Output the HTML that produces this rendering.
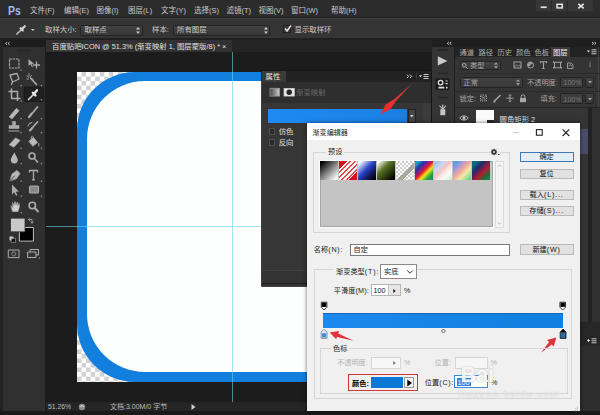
<!DOCTYPE html>
<html lang="zh-CN">
<head>
<meta charset="utf-8">
<title>Photoshop</title>
<style>
html,body{margin:0;padding:0;}
body{width:600px;height:415px;overflow:hidden;position:relative;background:#1c1c1c;font-family:"Liberation Sans","Noto Sans CJK SC",sans-serif;font-size:7.5px;line-height:1;color:#d8d8d8;}
.a{position:absolute;white-space:nowrap;}
.t{position:absolute;white-space:nowrap;line-height:1;}
/* ---------- app chrome ---------- */
#menubar{left:0;top:0;width:600px;height:17px;background:#2c2c2c;}
#menubar .t{top:6.6px;font-size:7.5px;color:#c8c8c8;}
#optbar{left:0;top:18.300px;width:600px;height:19.500px;background:#353535;border-top:1px solid #404040;box-sizing:border-box;}
#optbar .t{font-size:7.4px;color:#cccccc;}
.dd{position:absolute;background:linear-gradient(#424242,#383838);border:1px solid #232323;box-sizing:border-box;border-radius:1.5px;}
/* ---------- toolbar ---------- */
#tools{left:3px;top:40px;width:42px;height:371px;background:#303030;}
/* ---------- doc ---------- */
#tabbar{left:46px;top:40px;width:386px;height:11.500px;background:#242424;}
#doctab{left:0;top:0;width:186px;height:11.500px;background:#313131;}
#work{left:46px;top:52px;width:386px;height:350px;background:#1c1c1c;overflow:hidden;}
#status{left:46px;top:402px;width:386px;height:9px;background:#252525;}
/* ---------- dialog ---------- */
#dlg{left:307px;top:123px;width:273px;height:288.3px;background:#f0f0f0;color:#111;box-shadow:0 0 4px rgba(0,0,0,.6);}
#dlg .t{font-size:7.2px;color:#1a1a1a;}
.l{letter-spacing:.8px;}
.btn{position:absolute;box-sizing:border-box;border:1px solid #b9b9b9;background:#e1e1e1;text-align:center;font-size:7.2px;line-height:8.4px;color:#111;}
.grp{position:absolute;box-sizing:border-box;border:1px solid #d5d5d5;}
.ptab{top:8.5px;font-size:7.3px;color:#adadad;}
.fld{position:absolute;box-sizing:border-box;border:1px solid #7a7a7a;background:#fff;}
</style>
</head>
<body>

<!-- MENU BAR -->
<div id="menubar" class="a">
  <div class="a" style="left:5px;top:3px;width:16.5px;height:12.5px;background:#272b33;border-radius:1px;"></div>
  <div class="t" style="left:7.5px;top:4.1px;font-size:13px;font-weight:bold;color:#9dbde0;transform:scaleX(.8);transform-origin:0 0;">Ps</div>
  <div class="t" style="left:30px;">文件(F)</div>
  <div class="t" style="left:64px;">编辑(E)</div>
  <div class="t" style="left:96.5px;">图像(I)</div>
  <div class="t" style="left:128px;">图层(L)</div>
  <div class="t" style="left:161px;">文字(Y)</div>
  <div class="t" style="left:194px;">选择(S)</div>
  <div class="t" style="left:226.5px;">滤镜(T)</div>
  <div class="t" style="left:258.5px;">视图(V)</div>
  <div class="t" style="left:291px;">窗口(W)</div>
  <div class="t" style="left:331px;">帮助(H)</div>
  <svg class="a" style="left:530px;top:0;" width="70" height="17" viewBox="530 0 70 17">
    <rect x="536" y="0" width="56.700" height="11.300" fill="#373737"/>
    <path d="M551.300 0 V11.300 M567.300 0 V11.300" stroke="#2a2a2a" stroke-width="1"/>
    <rect x="540.700" y="6.400" width="6" height="1.700" fill="#e4e4e4"/>
    <rect x="557" y="4.300" width="5.300" height="3.600" fill="none" stroke="#e4e4e4" stroke-width="1.500"/>
    <path d="M578.300 3.800 L583.700 8.400 M583.700 3.800 L578.300 8.400" stroke="#e4e4e4" stroke-width="1.600" fill="none"/>
  </svg>
</div>
<div class="a" style="left:0;top:17px;width:600px;height:1px;background:#1d1d1d;"></div>

<!-- OPTIONS BAR -->
<div id="optbar" class="a">
  <svg class="a" style="left:8px;top:3px;" width="32" height="16" viewBox="8 21 32 16">
    <path d="M16.400 33.600 L21.300 28.700" stroke="#c4c4c4" stroke-width="1.400" fill="none"/>
    <path d="M20.600 27.200 L22.800 29.400 M21.500 28.500 L24.800 25.200" stroke="#d4d4d4" stroke-width="2.200" fill="none" stroke-linecap="round"/>
    <path d="M31 28 h3.600 l-1.800 2 z" fill="#cfcfcf"/>
  </svg>
  <div class="t" style="left:45px;top:6.5px;">取样大小:</div>
  <div class="dd" style="left:80px;top:5.5px;width:63px;height:11px;"></div>
  <div class="t" style="left:84.5px;top:7px;">取样点</div>
  <svg class="a" style="left:135px;top:7px;" width="6" height="9" viewBox="0 0 6 9"><path d="M1 3.4 L3 1 L5 3.4 Z M1 5.4 L3 7.8 L5 5.4 Z" fill="#d0d0d0"/></svg>
  <div class="t" style="left:152px;top:6.5px;">样本:</div>
  <div class="dd" style="left:172.5px;top:5.5px;width:97px;height:11px;"></div>
  <div class="t" style="left:177px;top:7px;">所有图层</div>
  <svg class="a" style="left:262.5px;top:7px;" width="6" height="9" viewBox="0 0 6 9"><path d="M1 3.4 L3 1 L5 3.4 Z M1 5.4 L3 7.8 L5 5.4 Z" fill="#d0d0d0"/></svg>
  <div class="a" style="left:283px;top:6px;width:8px;height:8px;box-sizing:border-box;border:1px solid #1e1e1e;background:#3c3c3c;"></div>
  <svg class="a" style="left:283px;top:5px;" width="10" height="10" viewBox="0 0 10 10"><path d="M2 4.5 L4 7 L8 1.5" stroke="#e6e6e6" stroke-width="1.4" fill="none"/></svg>
  <div class="t" style="left:294.5px;top:6.5px;">显示取样环</div>
</div>
<div class="a" style="left:0;top:37.800px;width:600px;height:2.500px;background:#202020;"></div>

<!-- TOOLBAR -->
<div class="a" style="left:0;top:40px;width:3px;height:375px;background:#232323;"></div>
<div id="tools" class="a">
  <div class="a" style="left:0;top:0;width:42px;height:6.500px;background:#1c1c1c;"></div>
  <svg class="a" style="left:0;top:0;" width="42" height="230" viewBox="3 40 42 230">
    <g fill="none" stroke="#ababab" stroke-width="1.2" stroke-linecap="round" stroke-linejoin="round">
      <!-- header arrows + grip -->
      <path d="M6.800 42.400 L5.600 43.500 L6.800 44.600 M9.300 42.400 L8.100 43.500 L9.300 44.600" stroke="#ddd" stroke-width=".9"/>
      <path d="M18 50.5 H30" stroke="#262626" stroke-width="1.6"/>
      <!-- selected highlight -->
      <rect x="24" y="87" width="19.5" height="14.5" fill="#1f1f1f" stroke="#191919" stroke-width=".8" rx="1"/>
      <!-- marquee -->
      <rect x="9.5" y="59" width="9.5" height="9" stroke-dasharray="1.8 1.6" stroke-width="1.1"/>
      <!-- move -->
      <path d="M28.5 59 L28.5 66 L30.5 64.3 L32 67.3 L33 66.8 L31.6 63.9 L34 63.7 Z" fill="#ababab" stroke="none"/>
      <path d="M36.5 62 V68 M33.5 65 H39.5" stroke-width="1.3"/>
      <!-- lasso -->
      <path d="M10 75 L17 73.5 L19 79 L12.5 82 Z M12.5 82 L11.5 84.5" stroke-width="1.3"/>
      <!-- wand -->
      <path d="M30.5 78 L36.5 84.5" stroke-width="1.6"/>
      <path d="M29 73.5 V76 M27 76 L28.6 77.2 M31.5 75.5 L30.4 76.8 M26.8 79 H28.5 M32 79 H33" stroke-width=".9"/>
      <!-- crop -->
      <path d="M11.5 89 V98.5 H20 M9 91.5 H17.5 V100.5" stroke-width="1.5"/>
      <!-- eyedropper (selected) -->
      <path d="M28.5 99.5 L33.5 94.5" stroke="#e6e6e6" stroke-width="1.5"/>
      <path d="M32.8 92.8 L35.5 95.5 M33.8 94.2 L37 90.2" stroke="#e6e6e6" stroke-width="2.3"/>
      <!-- healing -->
      <path d="M9.5 116.5 L16.5 108.5 L19 110.7 L12 118.7 Z" fill="#b9b9b9" stroke-width="1"/>
      <!-- brush -->
      <path d="M37.5 107 L32.5 113" stroke-width="1.8"/>
      <path d="M31.8 113.6 L29 117" stroke-width="2.3"/>
      <!-- stamp -->
      <path d="M12.5 121.5 h3 v4 h3.5 v3 h-10 v-3 h3.5 z" fill="#ababab" stroke-width=".6"/>
      <path d="M9 131 H19" stroke-width="1.2"/>
      <!-- history brush -->
      <path d="M37.5 122 L33 127" stroke-width="1.7"/>
      <path d="M32.4 127.8 L30 130.5" stroke-width="2.2"/>
      <path d="M28 126 A4 4 0 0 1 32 122.5" stroke-width="1"/>
      <!-- eraser -->
      <path d="M9.5 144.5 L15.5 138 L20 140.5 L14 147 Z" fill="#bdbdbd" stroke-width=".8"/>
      <!-- bucket -->
      <path d="M29 141 L33.5 137.5 L37.5 142.5 L33 146 Z" fill="#bdbdbd" stroke-width=".8"/>
      <path d="M31.5 139 C30.5 136 32.5 135 33.5 137.5 M38.8 143.5 v2.5" stroke-width="1"/>
      <!-- blur drop -->
      <path d="M14.3 152.5 C12.5 156 10.8 158 10.8 160 A3.5 3.5 0 0 0 17.8 160 C17.8 158 16 156 14.3 152.5 Z" fill="#b5b5b5" stroke="none"/>
      <!-- dodge -->
      <circle cx="32" cy="156" r="3" stroke-width="1.6"/>
      <path d="M34.3 158.5 L37.5 162" stroke-width="1.7"/>
      <!-- pen -->
      <path d="M10 180.5 L12 174 L17 170.5 L20 173.5 L16.5 178.5 Z" fill="#b9b9b9" stroke-width=".8"/>
      <path d="M10 180.5 L14.5 176" stroke="#353535" stroke-width=".9"/>
      <!-- T -->
      <path d="M29.5 172.5 V170.5 H37.5 V172.5 M33.5 170.5 V179.5 M32 179.8 H35" stroke-width="1.3" stroke-linecap="butt"/>
      <!-- path select -->
      <path d="M12 184.5 L12 194.5 L14.3 192.2 L16 195.7 L17.4 195 L15.8 191.7 L18.8 191.5 Z" fill="#ababab" stroke="none"/>
      <!-- rectangle -->
      <rect x="29.5" y="186" width="9" height="7" rx="1" fill="#8a8a8a" stroke-width="1.1"/>
      <!-- hand -->
      <path d="M11 206 L12.5 211.5 H18 L19.5 206.5 L19 203.5 L17.8 206 L17.3 202 L16 205.5 L15 201.5 L14 205.5 L12.5 202.5 L13 208 Z" fill="#cfcfcf" stroke-width=".7"/>
      <!-- zoom -->
      <circle cx="32.3" cy="205.5" r="3.2" stroke-width="1.6"/>
      <path d="M34.8 208 L38 211.5" stroke-width="1.9"/>
      <!-- swap arrows / default -->
      <path d="M28.5 219.5 h3.5 v3.5 M28.5 219.5 l1.3 -1.2 M28.5 219.5 l1.3 1.2 M32 223 l-1.2 -1.2 M32 223 l1.2 -1.2" stroke-width=".8"/>
      <rect x="9.5" y="236.5" width="4" height="4" fill="#c8c8c8" stroke="none"/>
      <rect x="11.5" y="238.5" width="4" height="4" fill="#111" stroke="#aaa" stroke-width=".6"/>
      <!-- bg / fg -->
      <rect x="19.8" y="227.5" width="13.6" height="13.6" fill="#000" stroke="#bdbdbd" stroke-width="1"/>
      <rect x="10.8" y="218.2" width="14.2" height="13.6" fill="#c9c9c9" stroke="#353535" stroke-width=".8"/>
      <!-- quick mask -->
      <rect x="8.7" y="250" width="10.3" height="7.6" stroke-width="1"/>
      <circle cx="13.8" cy="253.8" r="2" stroke-width=".9" stroke-dasharray="1 .8"/>
      <!-- screen mode -->
      <rect x="30.5" y="249.5" width="8" height="5.5" stroke-width="1"/>
      <rect x="28" y="252" width="8" height="5.5" fill="#353535" stroke-width="1"/>
      <path d="M38.5 258.5 l1.5 0 l0 -1.5 z" fill="#ababab" stroke="none"/>
    </g>
    <g fill="#9a9a9a">
      <rect x="20.5" y="69.5" width="1.3" height="1.3"/><rect x="20.5" y="85" width="1.3" height="1.3"/><rect x="20.5" y="100.5" width="1.3" height="1.3"/>
      <rect x="40.8" y="85" width="1.3" height="1.3"/><rect x="40.8" y="99" width="1.3" height="1.3"/>
      <rect x="20.5" y="118" width="1.3" height="1.3"/><rect x="40.8" y="118" width="1.3" height="1.3"/>
      <rect x="20.5" y="132" width="1.3" height="1.3"/><rect x="40.8" y="132" width="1.3" height="1.3"/>
      <rect x="20.5" y="147.5" width="1.3" height="1.3"/><rect x="40.8" y="147.5" width="1.3" height="1.3"/>
      <rect x="20.5" y="163" width="1.3" height="1.3"/><rect x="40.8" y="163" width="1.3" height="1.3"/>
      <rect x="20.5" y="180.5" width="1.3" height="1.3"/><rect x="40.8" y="180.5" width="1.3" height="1.3"/>
      <rect x="20.5" y="195.5" width="1.3" height="1.3"/><rect x="40.8" y="195.5" width="1.3" height="1.3"/>
      <rect x="20.5" y="212" width="1.3" height="1.3"/>
    </g>
  </svg>
</div>

<!-- DOCUMENT -->
<div id="tabbar" class="a">
  <div id="doctab" class="a"><div class="t" style="left:6px;top:2.5px;font-size:7.4px;color:#e0e0e0;">百度贴吧ICON @ 51.3% (渐变映射 1, 图层蒙版/8) * ×</div></div>
</div>
<div id="work" class="a">
  <!-- canvas: left 78 top 71.5 -> relative 32, 19.5 ; size 309.5 -->
  <div class="a" id="canvas" style="left:31.3px;top:19.5px;width:310.8px;height:310.5px;background:repeating-conic-gradient(#d2d2d2 0 25%,#fff 0 50%) 0 0/9.1px 9.1px;overflow:hidden;">
    <div class="a" style="left:0;top:0;width:310.8px;height:310.5px;border-radius:58px;background:#127fde;"></div>
    <div class="a" style="left:9.8px;top:9.8px;width:291.2px;height:290.9px;border-radius:58px;background:#fdfefe;"></div>
  </div>
  <div class="a" style="left:186.200px;top:0;width:1.300px;height:350px;background:rgba(105,210,238,.6);"></div>
  <div class="a" style="left:0;top:174.200px;width:386px;height:1.300px;background:rgba(105,210,238,.6);"></div>
</div>
<div id="status" class="a">
  <div class="t" style="left:2px;top:1.500px;font-size:6.800px;color:#bcbcbc;">51.26%</div>
  <svg class="a" style="left:31px;top:0;" width="10" height="10" viewBox="0 0 10 10"><circle cx="5" cy="5" r="3.200" fill="#8a8a8a"/><path d="M3.500 5 a1.500 1.500 0 0 1 3 0" stroke="#ddd" stroke-width="1" fill="none"/></svg>
  <div class="t" style="left:64px;top:1.200px;font-size:7px;color:#bcbcbc;">文档:3.00M/0 字节</div>
  <svg class="a" style="left:144px;top:1px;" width="7" height="8" viewBox="0 0 7 8"><path d="M1.500 1 L5.500 4 L1.500 7 Z" fill="#cfcfcf"/></svg>
</div>

<!-- PROPERTIES PANEL -->
<div id="props" class="a" style="left:262px;top:71px;width:169px;height:215px;background:#363636;box-shadow:0 0 0 .8px #151515;">
  <div class="a" style="left:0;top:0;width:169px;height:10.500px;background:#222;"></div>
  <div class="a" style="left:0;top:0;width:24px;height:10.500px;background:#3a3a3a;"></div>
  <div class="t" style="left:3.500px;top:2px;font-size:7.400px;color:#e4e4e4;">属性</div>
  <svg class="a" style="left:142px;top:1px;" width="27" height="9" viewBox="404 72 27 9">
    <path d="M407 74.600 L408.600 76.300 L407 78 M410 74.600 L411.600 76.300 L410 78" stroke="#d8d8d8" stroke-width="1" fill="none"/>
    <path d="M416.500 73.500 v6" stroke="#555" stroke-width=".8" stroke-dasharray="1 1"/>
    <path d="M419 75.200 h3 l-1.500 2 z" fill="#ddd"/><path d="M423.500 74.500 h5 M423.500 76.500 h5 M423.500 78.500 h5" stroke="#ddd" stroke-width=".9"/>
  </svg>
  <div class="a" style="left:0;top:10.500px;width:169px;height:21.500px;background:#2e2e2e;"></div>
  <svg class="a" style="left:7px;top:15.500px;" width="28" height="10" viewBox="0 0 28 10">
    <defs><linearGradient id="gm" x1="0" x2="1"><stop offset="0" stop-color="#444"/><stop offset="1" stop-color="#cfcfcf"/></linearGradient></defs>
    <rect x="1" y="1.300" width="9.500" height="7.800" fill="url(#gm)" stroke="#9a9a9a" stroke-width=".8"/>
    <rect x="15" y="1.300" width="10.500" height="7.800" fill="#e4e4e4" stroke="#cfcfcf" stroke-width=".6"/>
    <circle cx="20.200" cy="5.200" r="2.700" fill="#222"/>
  </svg>
  <div class="t" style="left:34px;top:17.500px;font-size:7.400px;color:#6a6a6a;">渐变映射</div>
  <div class="a" style="left:5.500px;top:37.500px;width:139.500px;height:14.500px;background:linear-gradient(90deg,#2089f2,#1c84ea 60%,#1a7ee0);"></div>
  <div class="a" style="left:146px;top:37.500px;width:7.500px;height:14.500px;box-sizing:border-box;border:1px solid #232323;background:#444;"></div>
  <svg class="a" style="left:147px;top:43px;" width="6" height="5" viewBox="0 0 6 5"><path d="M1 1 h3.600 l-1.800 2.400 z" fill="#ccc"/></svg>
  <div class="a" style="left:160.500px;top:32px;width:8.500px;height:167px;background:#3b3b3b;"></div>
  <div class="a" style="left:6.500px;top:57px;width:6.500px;height:6.500px;box-sizing:border-box;border:1px solid #505050;background:#2b2b2b;"></div>
  <div class="a" style="left:6.500px;top:68px;width:6.500px;height:6.500px;box-sizing:border-box;border:1px solid #505050;background:#2b2b2b;"></div>
  <div class="t" style="left:16.700px;top:57px;font-size:7.400px;color:#e0e0e0;">仿色</div>
  <div class="t" style="left:16.700px;top:68px;font-size:7.400px;color:#e0e0e0;">反向</div>
  <div class="a" style="left:0;top:199px;width:169px;height:16px;background:#333;border-top:1px solid #404040;box-sizing:border-box;"></div><div class="a" style="left:0;top:212px;width:169px;height:1px;background:#1c1c1c;"></div>
  <svg class="a" style="left:100px;top:5px;" width="60" height="45" viewBox="362 76 60 45">
    <defs><linearGradient id="ra" gradientUnits="userSpaceOnUse" x1="412.700" y1="83.200" x2="380.500" y2="114.200"><stop offset="0" stop-color="#c9504a" stop-opacity=".55"/><stop offset=".45" stop-color="#e2342f"/><stop offset="1" stop-color="#f02a2a"/></linearGradient></defs>
    <path d="M413.200 82.600 L396.200 100.800 L390.200 109.400 L380.500 114.300 L385.600 104.600 L394.400 99 Z" fill="url(#ra)"/>
  </svg>
</div>

<!-- ICON STRIP -->
<div id="strip" class="a" style="left:431.5px;top:40px;width:22px;height:375px;background:#343434;">
  <div class="a" style="left:0;top:0;width:22px;height:6.5px;background:#1f1f1f;"></div>
  <svg class="a" style="left:0;top:0;" width="22" height="90" viewBox="0 0 22 90">
    <path d="M16.8 2 L15.3 3.3 L16.8 4.6 M19.3 2 L17.8 3.3 L19.3 4.6" stroke="#ddd" stroke-width=".9" fill="none"/>
    <path d="M6 10 H16 M6 33.3 H16 M6 57.5 H16" stroke="#242424" stroke-width="1.5"/>
    <path d="M5.8 16.3 L15.4 21 L5.8 25.6 Z" fill="#c9c9c9"/>
    <rect x="3.5" y="38.3" width="14" height="12" rx="1.2" fill="#1c1c1c"/>
    <circle cx="8.6" cy="42.6" r="2.3" fill="none" stroke="#e2e2e2" stroke-width="1.3"/>
    <path d="M6.5 47.7 H12.3 M14 47.7 H15.5" stroke="#e2e2e2" stroke-width="1.7"/>
    <path d="M13.6 41 h2 M13.6 43.6 h2" stroke="#e2e2e2" stroke-width="1.2"/>
    <path d="M7.5 65.5 L10.5 69 M14 65.5 L11 69 M10.8 64.5 V69" stroke="#c6c6c6" stroke-width="1.1" fill="none"/>
    <rect x="8.3" y="69.2" width="5" height="6" fill="#c6c6c6"/>
  </svg>
</div>
<div class="a" style="left:453.5px;top:40px;width:1.5px;height:375px;background:#1e1e1e;"></div>

<!-- RIGHT PANELS -->
<div id="panels" class="a" style="left:455px;top:40px;width:145px;height:375px;background:#343434;">
  <div class="a" style="left:0;top:0;width:145px;height:6.5px;background:#1f1f1f;"></div>
  <svg class="a" style="left:134px;top:0;" width="11" height="7" viewBox="0 0 11 7"><path d="M3 2 L4.5 3.3 L3 4.6 M5.5 2 L7 3.3 L5.5 4.6" stroke="#ddd" stroke-width=".9" fill="none"/></svg>
  <div class="a" style="left:0;top:6.5px;width:145px;height:10px;background:#232323;"></div>
  <div class="a" style="left:95.5px;top:6.5px;width:19px;height:10.5px;background:#3a3a3a;"></div>
  <div class="t ptab" style="left:4.5px;">通道</div>
  <div class="t ptab" style="left:23.5px;">路径</div>
  <div class="t ptab" style="left:42.5px;">历史</div>
  <div class="t ptab" style="left:61px;">颜色</div>
  <div class="t ptab" style="left:79.5px;">色板</div>
  <div class="t ptab" style="left:98px;color:#f0f0f0;">图层</div>
  <svg class="a" style="left:131px;top:8px;" width="12" height="8" viewBox="0 0 12 8"><path d="M1 2.5 h3 l-1.5 2 z" fill="#ddd"/><path d="M5.5 1.8 h5 M5.5 3.8 h5 M5.5 5.8 h5" stroke="#ddd" stroke-width=".9"/></svg>

  <div class="a" style="left:142.500px;top:7px;width:1px;height:368px;background:#454545;"></div>
  <!-- filter row -->
  <div class="dd" style="left:4.5px;top:20.5px;width:41px;height:9.5px;"></div>
  <svg class="a" style="left:6px;top:21.5px;" width="8" height="8" viewBox="0 0 8 8"><circle cx="3.2" cy="3.2" r="1.8" fill="none" stroke="#a8a8a8" stroke-width="1"/><path d="M4.6 4.6 L6.8 6.8" stroke="#a8a8a8" stroke-width="1"/></svg>
  <div class="t" style="left:15px;top:21.5px;font-size:7.2px;color:#a6a6a6;">类型</div>
  <svg class="a" style="left:38px;top:21px;" width="6" height="9" viewBox="0 0 6 9"><path d="M1 3.6 L3 1.4 L5 3.6 Z M1 5.2 L3 7.4 L5 5.2 Z" fill="#a8a8a8"/></svg>
  <svg class="a" style="left:55px;top:19px;" width="90" height="13" viewBox="510 59 90 13">
    <g fill="none" stroke="#a2a2a2" stroke-width="1">
      <rect x="514" y="62" width="7" height="6"/><path d="M514.5 67 l2 -2.2 l1.6 1.4 l1.4 -1.2 l1.5 1.8" stroke-width=".8"/>
      <circle cx="530.5" cy="65" r="3"/><path d="M528.4 67.1 A3 3 0 0 1 532.6 62.9 Z" fill="#a2a2a2" stroke="none"/>
      <path d="M540.5 63.2 V61.8 H546.5 V63.2 M543.5 61.8 V68.3 M542.3 68.5 H544.7" stroke-width="1.1"/>
      <rect x="554.5" y="62.3" width="6" height="5.5" stroke-width="1"/><path d="M553 62.3 h1 M561 62.3 h1 M553 67.8 h1 M561 67.8 h1" stroke-width="1.4"/>
      <path d="M567.5 68.5 V63 h3.5 l2 2 V68.5 Z M569 66.3 a1.3 1.3 0 1 1 2.6 0" stroke-width=".9"/>
      <rect x="588.5" y="61" width="3" height="7" rx="1" fill="#5a5a5a" stroke="#2a2a2a" stroke-width=".7"/>
    </g>
  </svg>
  <div class="a" style="left:0;top:33px;width:145px;height:1px;background:#2a2a2a;"></div>

  <!-- blend row -->
  <div class="dd" style="left:4.5px;top:36.5px;width:63px;height:11px;"></div>
  <div class="t" style="left:8.5px;top:38.5px;font-size:7.2px;color:#a6a6a6;">正常</div>
  <svg class="a" style="left:60px;top:38px;" width="6" height="9" viewBox="0 0 6 9"><path d="M1 3.6 L3 1.4 L5 3.6 Z M1 5.2 L3 7.4 L5 5.2 Z" fill="#a8a8a8"/></svg>
  <div class="t" style="left:72px;top:38.5px;font-size:7.2px;color:#a6a6a6;">不透明度:</div>
  <div class="dd" style="left:105px;top:36.5px;width:23px;height:11px;background:#3c3c3c;"></div>
  <div class="t" style="left:108.5px;top:39px;font-size:7px;color:#7a7a7a;">100%</div>
  <div class="dd" style="left:129.5px;top:36.5px;width:9.5px;height:11px;"></div>
  <svg class="a" style="left:131.5px;top:40px;" width="6" height="5" viewBox="0 0 6 5"><path d="M1 1 h4 l-2 2.6 z" fill="#a2a2a2"/></svg>
  <div class="a" style="left:0;top:50.5px;width:145px;height:1px;background:#2a2a2a;"></div>

  <!-- lock row -->
  <div class="t" style="left:4.5px;top:55px;font-size:7.2px;color:#a6a6a6;">锁定:</div>
  <svg class="a" style="left:24px;top:52px;" width="50" height="13" viewBox="479 92 50 13">
    <g fill="none" stroke="#a8a8a8" stroke-width="1">
      <rect x="480.5" y="95" width="6" height="6" stroke-dasharray="1.2 1"/><path d="M481.5 96 l4 4 M485.500 96 l-4 4" stroke-width=".8"/>
      <path d="M494 101.500 L500.500 95" stroke-width="1.5"/><path d="M493.500 102 l1.800 -.5" stroke-width="1.800"/>
      <path d="M510 94.500 V102 M506.300 98.200 H513.700 M508.800 95.700 L510 94.500 L511.200 95.700 M508.800 100.800 L510 102 L511.200 100.800" stroke-width=".9"/>
      <rect x="520" y="98" width="6" height="4.200" fill="#a8a8a8" stroke="none"/><path d="M521.200 98 V96.600 a1.800 1.800 0 0 1 3.600 0 V98" stroke-width="1"/>
    </g>
  </svg>
  <div class="t" style="left:85.5px;top:55px;font-size:7.2px;color:#a6a6a6;">填充:</div>
  <div class="dd" style="left:105px;top:53px;width:23px;height:11px;background:#3c3c3c;"></div>
  <div class="t" style="left:108.5px;top:55.500px;font-size:7px;color:#7a7a7a;">100%</div>
  <div class="dd" style="left:129.500px;top:53px;width:9.500px;height:11px;"></div>
  <svg class="a" style="left:131.500px;top:56.500px;" width="6" height="5" viewBox="0 0 6 5"><path d="M1 1 h4 l-2 2.600 z" fill="#a2a2a2"/></svg>
  <div class="a" style="left:0;top:66.500px;width:145px;height:1.500px;background:#262626;"></div>

  <!-- layer list -->
  <div class="a" style="left:0;top:68px;width:133px;height:307px;background:#353535;"></div>
  <div class="a" style="left:0;top:88.500px;width:133px;height:25px;background:#4a4d69;"></div>
  <div class="a" style="left:133px;top:68px;width:3.500px;height:307px;background:#222;"></div>
  <div class="a" style="left:136.500px;top:68px;width:8.500px;height:307px;background:#303030;"></div>
  <svg class="a" style="left:4px;top:74px;" width="10" height="8" viewBox="0 0 10 8"><path d="M.8 4 C2.500 1.300 7.500 1.300 9.200 4 C7.500 6.700 2.500 6.700 .8 4 Z" fill="none" stroke="#c6c6c6" stroke-width="1"/><circle cx="5" cy="4" r="1.500" fill="#c6c6c6"/></svg>
  <div class="a" style="left:21px;top:69.500px;width:17.500px;height:14px;background:#fbfbfb;"></div>
  <div class="a" style="left:32px;top:79.500px;width:6.500px;height:4px;background:#2a2a2a;"></div>
  <div class="t" style="left:44.500px;top:75.500px;font-size:7.400px;color:#e0e0e0;">圆角矩形 2</div>
  <div class="a" style="left:125px;top:282px;width:20px;height:24px;background:#272727;"></div>
  <div class="a" style="left:125px;top:306px;width:20px;height:69px;background:#2e2e2e;"></div>
  <svg class="a" style="left:130.500px;top:297px;" width="12" height="8" viewBox="0 0 12 8"><path d="M1 3.500 h3 M2.500 2 v3" stroke="#ddd" stroke-width=".9"/><path d="M5.500 1.800 h5 M5.500 3.800 h5 M5.500 5.800 h5" stroke="#ddd" stroke-width=".9"/></svg>
</div>

<div class="a" style="left:0;top:411px;width:600px;height:4px;background:#1a1a1a;"></div>

<!-- DIALOG -->
<div id="dlg" class="a">
  <div class="a" style="left:0;top:0;width:273px;height:16.5px;background:#fff;"></div>
  <div class="t" style="left:5.5px;top:6.800px;font-size:7.1px !important;">渐变编辑器</div>
  <svg class="a" style="left:205px;top:2px;" width="64" height="14" viewBox="512 125 64 14">
    <path d="M513 132.600 h6" stroke="#c9c9c9" stroke-width="1"/>
    <rect x="536.400" y="129.600" width="5.800" height="5.600" fill="none" stroke="#222" stroke-width="1.100"/>
    <path d="M562.600 129.300 L569.300 136 M569.300 129.300 L562.600 136" stroke="#222" stroke-width="1.100"/>
  </svg>

  <!-- presets -->
  <div class="grp" style="left:6px;top:29px;width:196.7px;height:81px;"></div>
  <div class="t" style="left:19px;top:24.5px;background:#f0f0f0;padding:0 2px;">预设</div>
  <svg class="a" style="left:182.5px;top:24.5px;background:#f0f0f0;" width="10" height="8" viewBox="0 0 10 8"><circle cx="4" cy="4" r="1.900" fill="none" stroke="#333" stroke-width="1.500"/><path d="M4 .8 V7.200 M.8 4 H7.200 M1.700 1.700 L6.300 6.300 M6.300 1.700 L1.700 6.300" stroke="#333" stroke-width=".9"/><circle cx="4" cy="4" r=".9" fill="#f0f0f0"/><path d="M8 6.500 h1.500" stroke="#333" stroke-width="1"/></svg>
  <div class="a" style="left:12.8px;top:37.8px;width:173px;height:66.7px;background:#c4c4c4;box-sizing:border-box;border:1px solid #a6a6a6;box-shadow:0 0 0 1px #fafafa;"></div>
  <div class="a" style="left:13.3px;top:38.3px;width:18px;height:18.4px;background:linear-gradient(135deg,#000 8%,#fff 92%);"></div>
  <div class="a" style="left:32.3px;top:38.3px;width:18px;height:18.4px;background:linear-gradient(135deg,#d0161c 0 22%,transparent 22% 78%,#d0161c 78%),repeating-linear-gradient(135deg,#e8474b 0 1.6px,#fff 1.6px 3.6px);"></div>
  <div class="a" style="left:51.3px;top:38.3px;width:18px;height:18.4px;background:linear-gradient(135deg,#fff 8%,#2a44c8 45%,#101a60 70%,#000 95%);"></div>
  <div class="a" style="left:70.3px;top:38.3px;width:18px;height:18.4px;background:linear-gradient(135deg,#fff 6%,#5a7228 38%,#2a3a10 65%,#000 92%);"></div>
  <div class="a" style="left:89.3px;top:38.3px;width:18px;height:18.4px;background:linear-gradient(135deg,transparent 0 52%,#a8a89c 52% 68%,transparent 68%),repeating-conic-gradient(#cfcfcf 0 25%,#fff 0 50%) 0 0/4px 4px;"></div>
  <div class="a" style="left:108.3px;top:38.3px;width:18px;height:18.4px;background:linear-gradient(135deg,#1f9bc4 0 12%,#1f3aa8 26%,#7a1f8a 38%,#e8192c 50%,#f4e51e 64%,#27a83c 80%,#128a6a 100%);"></div>
  <div class="a" style="left:127.3px;top:38.3px;width:18px;height:18.4px;background:linear-gradient(135deg,#a9c4ee 0 14%,#cfd6f2 30%,#f5c3c3 46%,#fbeeea 62%,#f4fbf0 76%,#cdeccf 100%);"></div>
  <div class="a" style="left:146.3px;top:38.3px;width:18px;height:18.4px;background:linear-gradient(135deg,#5f9ee6 0 14%,#b79ad0 32%,#f0a99a 48%,#f7e9a4 66%,#9adf9c 84%,#5cc98a 100%);"></div>
  <div class="a" style="left:165.3px;top:38.3px;width:18px;height:18.4px;background:linear-gradient(135deg,#0f6c86 0 14%,#1f2a6c 34%,#7a1f48 50%,#b3202c 62%,#1f6a3a 80%,#0c8a48 100%);"></div>
  <div class="a" style="left:187.5px;top:38px;width:9px;height:66.700px;background:#f4f4f4;border:1px solid #dcdcdc;box-sizing:border-box;"></div>
  <svg class="a" style="left:187.5px;top:38px;" width="9" height="67" viewBox="0 0 9 67"><path d="M2.800 5.500 L4.500 3.800 L6.200 5.500 M2.800 61.500 L4.500 63.200 L6.200 61.500" stroke="#b0b0b0" stroke-width=".9" fill="none"/></svg>

  <!-- buttons -->
  <div class="btn" style="left:212.6px;top:29px;width:54px;height:10.200px;border:1.300px solid #3c78b4;background:#e3eef9;">确定</div>
  <div class="btn" style="left:212.6px;top:45.7px;width:54px;height:10.200px;">复位</div>
  <div class="btn" style="left:212.6px;top:66.5px;width:54px;height:10.200px;">载入<span class="l">(L)...</span></div>
  <div class="btn" style="left:212.6px;top:82.6px;width:54px;height:10.200px;">存储<span class="l">(S)...</span></div>
  <div class="btn" style="left:212.6px;top:121.3px;width:54px;height:10.700px;line-height:9.600px;">新建<span class="l">(W)</span></div>

  <!-- name -->
  <div class="t" style="left:6.8px;top:123px;">名称<span class="l">(N):</span></div>
  <div class="fld" style="left:43px;top:120.8px;width:159.5px;height:11.800px;"></div>
  <div class="t" style="left:46.5px;top:123.3px;">自定</div>

  <!-- gradient type group -->
  <div class="grp" style="left:6.5px;top:146px;width:258.0px;height:130px;"></div>
  <div class="t" style="left:26px;top:144.5px;background:#f0f0f0;padding:0 3px;">渐变类型<span class="l">(T):</span></div>
  <div class="fld" style="left:73px;top:141px;width:36.500px;height:14.800px;border-color:#8a8a8a;"></div>
  <div class="t" style="left:77px;top:144.7px;">实底</div>
  <svg class="a" style="left:99px;top:145.5px;" width="8" height="6" viewBox="0 0 8 6"><path d="M1.200 1.500 L4 4.300 L6.800 1.500" stroke="#333" stroke-width="1" fill="none"/></svg>
  <div class="t" style="left:26.8px;top:163.8px;">平滑度<span class="l" style="letter-spacing:.2px;">(M):</span></div>
  <div class="fld" style="left:63.7px;top:161px;width:30px;height:12.400px;border-color:#b5b5b5;"></div>
  <div class="a" style="left:81px;top:162px;width:11.700px;height:10.400px;background:#e6e6e6;border-left:1px solid #c4c4c4;box-sizing:border-box;"></div>
  <div class="t" style="left:66.5px;top:164px;font-size:7.300px;">100</div>
  <svg class="a" style="left:85px;top:164.5px;" width="5" height="6" viewBox="0 0 5 6"><path d="M1.200 1 L3.800 3 L1.200 5 Z" fill="#222"/></svg>
  <div class="t" style="left:97px;top:163.8px;">%</div>

  <!-- gradient bar + stops -->
  <div class="a" style="left:16.3px;top:189.6px;width:240px;height:15.3px;background:linear-gradient(90deg,#1a88ee,#127fde);box-sizing:border-box;border-top:1px solid #1868b8;"></div>
  <svg class="a" style="left:11px;top:177px;" width="254" height="56" viewBox="318 300 254 56">
    <!-- opacity stops -->
    <g id="ostop">
      <path d="M321.300 302.200 h5.600 v5 l-2.800 2.800 l-2.800 -2.800 z" fill="#fff" stroke="#222" stroke-width=".9"/>
      <rect x="321.900" y="302.700" width="4.400" height="4.200" fill="#000"/>
    </g>
    <g transform="translate(238.600 0)">
      <path d="M321.300 302.200 h5.600 v5 l-2.800 2.800 l-2.800 -2.800 z" fill="#fff" stroke="#222" stroke-width=".9"/>
      <rect x="321.900" y="302.700" width="4.400" height="4.200" fill="#000"/>
    </g>
    <!-- color stops -->
    <path d="M324.100 329.200 l2.900 3 v6.200 h-5.800 v-6.200 z" fill="#dfeaf6" stroke="#7a8a9a" stroke-width=".9"/>
    <rect x="322.100" y="333.200" width="4" height="4.300" fill="#3f8fe0"/>
    <path d="M563.100 329.200 l2.900 3 v6.200 h-5.800 v-6.200 z" fill="#3a5a70" stroke="#1a2a34" stroke-width=".9"/>
    <path d="M563.100 328.900 l3.100 3.300 h-6.200 z" fill="#0c0c0c"/>
    <rect x="561.300" y="333.400" width="3.600" height="3.800" fill="#2a6fae"/>
    <!-- midpoint -->
    <path d="M443.400 329 l2 2 l-2 2 l-2 -2 z" fill="#fff" stroke="#333" stroke-width=".8"/>
    <!-- red arrows -->
    <path d="M329.600 332.400 L339.200 330.900 L338.200 333.500 L353.500 340.700 L337 336.900 L336.200 339.300 Z" fill="#e0323a"/>
    <path d="M556.300 337.400 L553.800 346.600 L551.700 344.500 L541 352.800 L549 342 L547 340 Z" fill="#e0323a"/>
  </svg>

  <!-- stops group -->
  <div class="grp" style="left:12.5px;top:225.3px;width:248.0px;height:45.69999999999999px;"></div>
  <div class="t" style="left:24px;top:221.5px;background:#f0f0f0;padding:0 2px;">色标</div>
  <div class="t" style="left:30px;top:236.3px;color:#b4b4b4;">不透明度:</div>
  <div class="fld" style="left:64px;top:234.3px;width:30px;height:11.800px;border-color:#d6d6d6;background:#f6f6f6;"></div>
  <svg class="a" style="left:85px;top:237.3px;" width="5" height="6" viewBox="0 0 5 6"><path d="M1.200 1 L3.800 3 L1.200 5 Z" fill="#777"/></svg>
  <div class="t" style="left:97px;top:236.3px;color:#b4b4b4;">%</div>
  <div class="t" style="left:127.5px;top:236.3px;color:#b4b4b4;">位置:</div>
  <div class="fld" style="left:148px;top:234.3px;width:33px;height:11.800px;border-color:#d6d6d6;background:#f6f6f6;"></div>
  <div class="t" style="left:183.5px;top:236.3px;color:#b4b4b4;">%</div>

  <div class="a" style="left:40.7px;top:250.8px;width:70.10000000000002px;height:17.5px;box-sizing:border-box;border:1.800px solid #d0353b;"></div>
  <div class="t" style="left:45px;top:256.600px;font-weight:bold;color:#000;">颜色:</div>
  <div class="a" style="left:64.4px;top:253.7px;width:31.400000000000034px;height:11.5px;background:#0b78d6;"></div>
  <div class="a" style="left:97px;top:253.7px;width:10px;height:11.500px;box-sizing:border-box;border:1px solid #9a9a9a;background:#f4f4f4;"></div>
  <svg class="a" style="left:98.5px;top:255.5px;" width="7" height="8" viewBox="0 0 7 8"><path d="M1.300 .6 L6 4 L1.300 7.400 Z" fill="#000"/></svg>
  <div class="t" style="left:117.8px;top:256px;">位置<span class="l">(C):</span></div>
  <div class="fld" style="left:146.8px;top:252.2px;width:34px;height:12.400px;border-color:#3a8ad8;"></div>
  <div class="a" style="left:150px;top:254.5px;width:13.500px;height:8px;background:#2f86e0;"></div>
  <div class="t" style="left:150.5px;top:255.5px;color:#fff;font-size:7.200px;">100</div>
  <div class="t" style="left:184px;top:256px;">%</div>

  <!-- watermark -->
  <div class="t" style="left:153.500px;top:241.200px;font-size:22px !important;font-weight:bold;color:rgba(255,255,255,.9) !important;letter-spacing:-.3px;text-shadow:0 0 1.500px rgba(120,120,120,.55);">Bai</div>
  <div class="t" style="left:152.500px;top:267.200px;font-size:9px !important;color:rgba(255,255,255,.85) !important;letter-spacing:1.65px;text-shadow:0 0 1px rgba(120,120,120,.55);">jingyan.baidu.com</div>
  <svg class="a" style="left:266px;top:283px;" width="6" height="6" viewBox="0 0 6 6"><path d="M4.500 1 v.1 M4.500 2.800 v.1 M2.700 2.800 v.1 M4.500 4.600 v.1 M2.700 4.600 v.1 M.9 4.600 v.1" stroke="#b4b4b4" stroke-width="1" stroke-linecap="square"/></svg>
</div>

</body>
</html>
